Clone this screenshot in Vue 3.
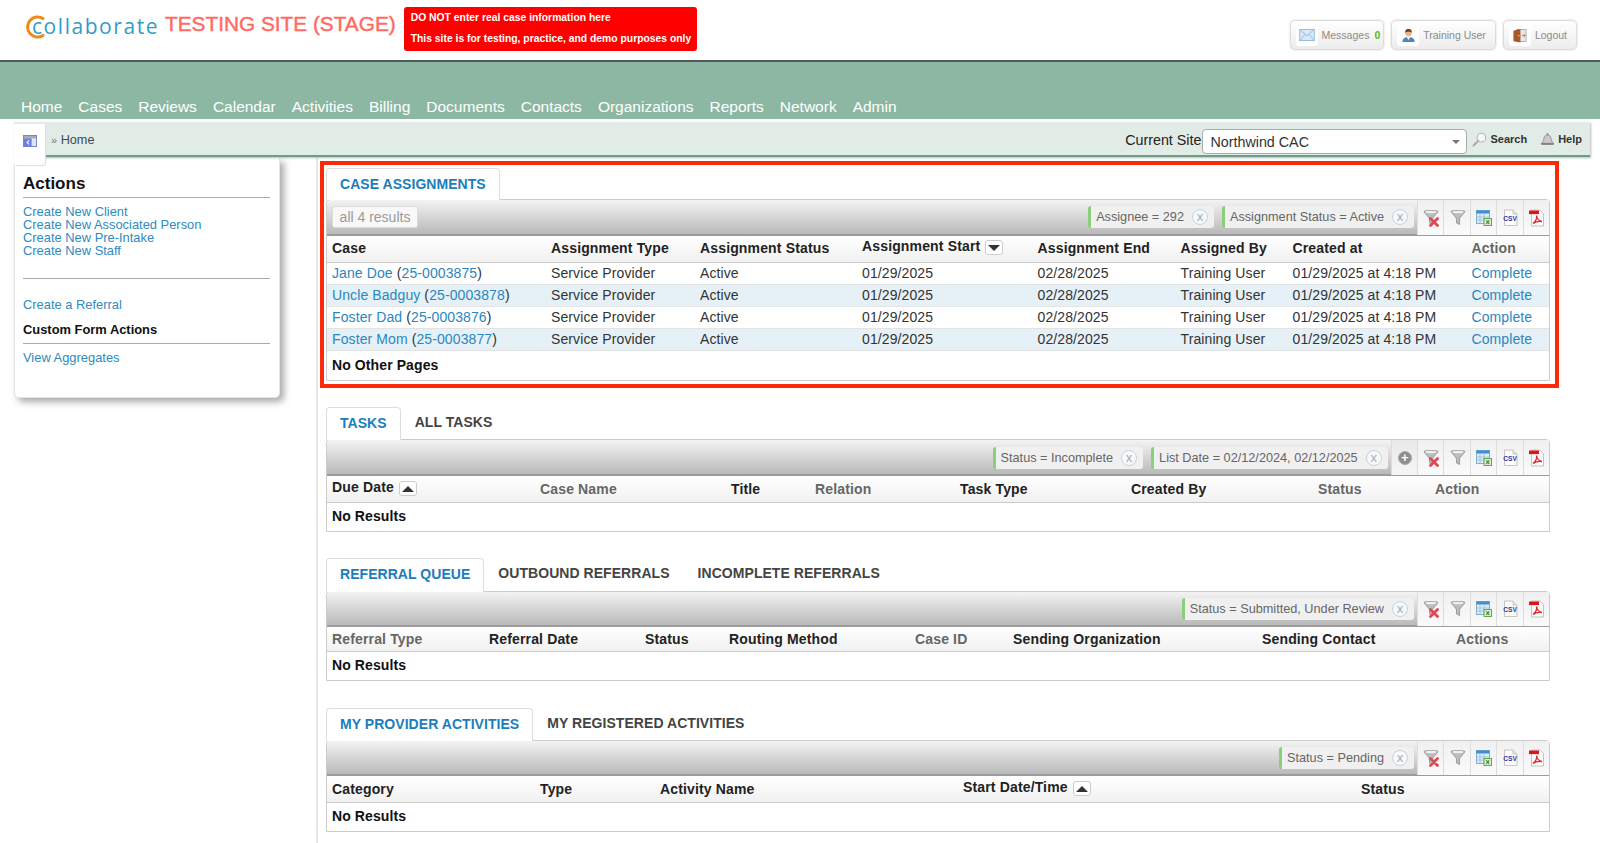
<script setup>
const nav = ['Home','Cases','Reviews','Calendar','Activities','Billing','Documents','Contacts','Organizations','Reports','Network','Admin']

const rows = [
  { name: 'Jane Doe', id: '25-0003875' },
  { name: 'Uncle Badguy', id: '25-0003878' },
  { name: 'Foster Dad', id: '25-0003876' },
  { name: 'Foster Mom', id: '25-0003877' }
]

const caseCols = '219px 149px 162px 175.5px 143px 112px 179px 1fr'
const caseHead = [
  { t: 'Case' }, { t: 'Assignment Type' }, { t: 'Assignment Status' },
  { t: 'Assignment Start', sort: 'down' }, { t: 'Assignment End' }, { t: 'Assigned By' },
  { t: 'Created at' }, { t: 'Action', dim: true }
]

const panels = [
  {
    tabs: ['TASKS', 'ALL TASKS'],
    pills: ['Status = Incomplete', 'List Date = 02/12/2024, 02/12/2025'],
    plus: true,
    cols: '208px 191px 84px 145px 171px 187px 117px 1fr',
    head: [
      { t: 'Due Date', sort: 'up' }, { t: 'Case Name', dim: true }, { t: 'Title' }, { t: 'Relation', dim: true },
      { t: 'Task Type' }, { t: 'Created By' }, { t: 'Status', dim: true }, { t: 'Action', dim: true }
    ],
    cls: 'p-tasks'
  },
  {
    tabs: ['REFERRAL QUEUE', 'OUTBOUND REFERRALS', 'INCOMPLETE REFERRALS'],
    pills: ['Status = Submitted, Under Review'],
    cols: '157px 156px 84px 186px 98px 249px 194px 1fr',
    head: [
      { t: 'Referral Type', dim: true }, { t: 'Referral Date' }, { t: 'Status' }, { t: 'Routing Method' },
      { t: 'Case ID', dim: true }, { t: 'Sending Organization' }, { t: 'Sending Contact' }, { t: 'Actions', dim: true }
    ],
    cls: 'p-ref'
  },
  {
    tabs: ['MY PROVIDER ACTIVITIES', 'MY REGISTERED ACTIVITIES'],
    pills: ['Status = Pending'],
    cols: '208px 120px 303px 398px 1fr',
    head: [
      { t: 'Category' }, { t: 'Type' }, { t: 'Activity Name' }, { t: 'Start Date/Time', sort: 'up' }, { t: 'Status' }
    ],
    cls: 'p-act'
  }
]

const tools = ['i-clear', 'i-filter', 'i-xls', 'i-csv', 'i-pdf']
</script>

<template>
  <div class="page">
    <svg class="sprite" width="0" height="0" aria-hidden="true">
      <defs>
        <symbol id="i-funnel" viewBox="0 0 18 18">
          <path d="M2 2.5C2 1.2 16 1.2 16 2.5 16 3.6 11 8 10.6 9.5L10.6 15.5 7.6 14 7.4 9.5C7 8 2 3.6 2 2.5Z" fill="#bdbdbd" stroke="#8d8d8d" stroke-width=".8"/>
          <ellipse cx="9" cy="3" rx="5.5" ry="1.2" fill="#efefef"/>
        </symbol>
        <symbol id="i-clear" viewBox="0 0 18 18">
          <use href="#i-funnel"/>
          <path d="M8.5 9.5L15.5 16.5M15.5 9.5L8.5 16.5" stroke="#e2484f" stroke-width="2.8" stroke-linecap="round"/>
        </symbol>
        <symbol id="i-filter" viewBox="0 0 18 18">
          <use href="#i-funnel"/>
        </symbol>
        <symbol id="i-xls" viewBox="0 0 18 18">
          <rect x="1.5" y="1.5" width="13" height="13" fill="#dcecf8" stroke="#6d9cc4" stroke-width=".8"/>
          <rect x="1.5" y="1.5" width="13" height="3" fill="#3d8fd1"/>
          <path d="M5 4.5V14.5M9 4.5V14.5M1.5 8H14.5M1.5 11H14.5" stroke="#8db8d8" stroke-width=".7"/>
          <rect x="9" y="9.5" width="7.5" height="7" fill="#d8efd0" stroke="#5c9a47" stroke-width=".9"/>
          <path d="M11.3 11.3L14.2 14.8M14.2 11.3L11.3 14.8" stroke="#3f8a30" stroke-width="1.1"/>
        </symbol>
        <symbol id="i-csv" viewBox="0 0 20 18">
          <path d="M4.5 1H13L17 5V16.5H4.5Z" fill="#fbfbfb" stroke="#b9b9b9" stroke-width=".8"/>
          <path d="M13 1V5H17" fill="#e6e6e6" stroke="#b9b9b9" stroke-width=".7"/>
          <text x="10" y="12" font-size="6.6" font-weight="700" text-anchor="middle" fill="#2f35a8" font-family="Liberation Sans, sans-serif">CSV</text>
        </symbol>
        <symbol id="i-pdf" viewBox="0 0 18 18">
          <path d="M3.5 1H12L15.5 4.5V17H3.5Z" fill="#fbfbfb" stroke="#b5b5b5" stroke-width=".8"/>
          <rect x="1" y="1.5" width="10" height="3.6" fill="#d9161c"/>
          <path d="M5 14.5C7.5 12.5 9 9 8.6 6.5 9 9.5 11 12 14 12.5 11 12 7.5 12.7 5 14.5Z" fill="none" stroke="#e02a2a" stroke-width="1.3"/>
        </symbol>
      </defs>
    </svg>

    <header class="top">
      <div class="logo">
        <svg class="logo-c" viewBox="0 0 22 24" width="22" height="24">
          <path d="M17 3.6A10 10 0 1 0 17 20.4" fill="none" stroke="#ee8a1c" stroke-width="3" stroke-linecap="round"/>
        </svg>
        <span class="logo-text">collaborate</span>
      </div>
      <div class="site-name">TESTING SITE (STAGE)</div>
      <div class="banner">
        <div>DO NOT enter real case information here</div>
        <div>This site is for testing, practice, and demo purposes only</div>
      </div>
      <div class="user-btns">
        <div class="ubtn">
          <span class="ubox">
            <svg viewBox="0 0 18 14" width="16" height="12">
              <rect x=".5" y=".5" width="17" height="13" fill="#d7e8f8" stroke="#8db4da"/>
              <path d="M.5 .5L9 8 17.5 .5M.5 13.5L6.5 6.5M17.5 13.5L11.5 6.5" fill="none" stroke="#8db4da"/>
            </svg>
          </span>
          <span class="ulabel">Messages</span><b class="zero">0</b>
        </div>
        <div class="ubtn">
          <span class="ubox">
            <svg viewBox="0 0 16 16" width="15" height="15">
              <path d="M1.5 15C1.5 11 4 9.5 8 9.5S14.5 11 14.5 15Z" fill="#4f86b8"/>
              <path d="M6 9.5L8 13 10 9.5Z" fill="#e9e9e9"/>
              <circle cx="8" cy="5.4" r="3.4" fill="#e8b48c"/>
              <path d="M4.4 5C4.2 1.5 6.5 1 8 1S11.8 1.5 11.6 5C10.5 3.6 6 3.8 4.4 5Z" fill="#7a3d1b"/>
            </svg>
          </span>
          <span class="ulabel">Training User</span>
        </div>
        <div class="ubtn">
          <span class="ubox">
            <svg viewBox="0 0 16 16" width="15" height="15">
              <rect x="5" y="1.5" width="10" height="13" fill="#e8e8e8" stroke="#9b9b9b" stroke-width=".8"/>
              <path d="M1.5 3L9 1V15.5L1.5 14Z" fill="#a85a22"/>
              <circle cx="7.3" cy="8.3" r=".8" fill="#f0d9a0"/>
              <path d="M10.5 8H14M12.5 6.3L14 8 12.5 9.7" fill="none" stroke="#8a8a8a" stroke-width=".9"/>
            </svg>
          </span>
          <span class="ulabel">Logout</span>
        </div>
      </div>
    </header>

    <nav class="nav">
      <a v-for="n in nav" :key="n" class="nav-item">{{ n }}</a>
    </nav>

    <div class="crumb-bar">
      <div class="side-tab">
        <svg viewBox="0 0 14 12" width="14" height="12">
          <rect x=".5" y=".5" width="13" height="11" fill="#dfe4f5" stroke="#7486cc"/>
          <rect x="1" y="1" width="12" height="2.4" fill="#a6abb6"/>
          <rect x="1" y="3.4" width="7.6" height="8" fill="#6d80de"/>
          <path d="M6.2 5.4L4 7.4 6.2 9.4" fill="none" stroke="#fff" stroke-width="1.1"/>
        </svg>
      </div>
      <div class="crumb"><span class="raquo">»</span> Home</div>
      <div class="crumb-right">
        <span class="cur-label">Current Site</span>
        <div class="site-select">
          <span>Northwind CAC</span>
          <i class="caret"></i>
        </div>
        <span class="tool-link search">
          <svg viewBox="0 0 16 16" width="15" height="15">
            <circle cx="10" cy="6" r="4.6" fill="#f6f6f6" stroke="#b4b4b4" stroke-width="1.1"/>
            <path d="M6.6 9.4L1.6 14.4" stroke="#a9a9a9" stroke-width="2" stroke-linecap="round"/>
          </svg>
          Search
        </span>
        <span class="tool-link help">
          <svg viewBox="0 0 16 16" width="15" height="14">
            <path d="M1 13C3 11.5 3.5 9.5 4 7 4.5 4.5 6 3.5 8 3.5S11.5 4.5 12 7C12.5 9.5 13 11.5 15 13Z" fill="#c9c9c9" stroke="#7d7d7d" stroke-width=".8"/>
            <rect x="1" y="13" width="14" height="1.6" fill="#6e6e6e"/>
            <circle cx="8" cy="2.4" r="1.1" fill="#777"/>
          </svg>
          Help
        </span>
      </div>
    </div>

    <div class="body">
      <aside class="sidebar">
        <h2 class="side-title">Actions</h2>
        <div class="side-links tight">
          <a>Create New Client</a>
          <a>Create New Associated Person</a>
          <a>Create New Pre-Intake</a>
          <a>Create New Staff</a>
        </div>
        <hr class="rule r2" />
        <a class="single first">Create a Referral</a>
        <div class="side-sub">Custom Form Actions</div>
        <hr class="rule r3" />
        <a class="single">View Aggregates</a>
      </aside>

      <main class="main">
        <div class="highlight">
          <section class="panel">
            <div class="tabs">
              <div class="tab active">CASE ASSIGNMENTS</div>
            </div>
            <div class="box">
              <div class="toolbar">
                <div class="count">all 4 results</div>
                <div class="pills">
                  <div class="pill"><span>Assignee = 292</span><i class="x">x</i></div>
                  <div class="pill"><span>Assignment Status = Active</span><i class="x">x</i></div>
                </div>
                <div class="tool-cells">
                  <div v-for="t in tools" :key="t" class="cell">
                    <svg :class="t === 'i-csv' ? 'ti wide' : 'ti'"><use :href="'#' + t" /></svg>
                  </div>
                </div>
              </div>
              <div class="thead" :style="{ gridTemplateColumns: caseCols }">
                <div v-for="h in caseHead" :key="h.t" :class="['th', { dim: h.dim, sorted: h.sort }]">
                  <span>{{ h.t }}</span>
                  <span v-if="h.sort" class="sortbtn"><i :class="h.sort"></i></span>
                </div>
              </div>
              <div class="rows">
                <div v-for="r in rows" :key="r.id" class="tr" :style="{ gridTemplateColumns: caseCols }">
                  <div><a>{{ r.name }}</a> (<a>{{ r.id }}</a>)</div>
                  <div>Service Provider</div>
                  <div>Active</div>
                  <div>01/29/2025</div>
                  <div>02/28/2025</div>
                  <div>Training User</div>
                  <div>01/29/2025 at 4:18 PM</div>
                  <div><a>Complete</a></div>
                </div>
              </div>
              <div class="foot">No Other Pages</div>
            </div>
          </section>
        </div>

        <section v-for="p in panels" :key="p.cls" :class="['panel', 'gap', p.cls]">
          <div class="tabs">
            <div v-for="(t, i) in p.tabs" :key="t" :class="['tab', { active: i === 0 }]">{{ t }}</div>
          </div>
          <div class="box">
            <div class="toolbar">
              <div class="pills">
                <div v-for="f in p.pills" :key="f" class="pill"><span>{{ f }}</span><i class="x">x</i></div>
              </div>
              <div class="tool-cells">
                <div v-if="p.plus" class="cell plus-cell"><span class="plus">+</span></div>
                <div v-for="t in tools" :key="t" class="cell">
                  <svg :class="t === 'i-csv' ? 'ti wide' : 'ti'"><use :href="'#' + t" /></svg>
                </div>
              </div>
            </div>
            <div class="thead" :style="{ gridTemplateColumns: p.cols }">
              <div v-for="h in p.head" :key="h.t" :class="['th', { dim: h.dim, sorted: h.sort }]">
                <span>{{ h.t }}</span>
                <span v-if="h.sort" class="sortbtn"><i :class="h.sort"></i></span>
              </div>
            </div>
            <div class="empty">No Results</div>
          </div>
        </section>
      </main>
    </div>
  </div>
</template>

<style>
html, body { margin: 0; overflow: hidden; background: #fff; }
</style>

<style scoped>
.page {
  width: 1600px;
  height: 843px;
  overflow: hidden;
  font-family: "Liberation Sans", Arial, sans-serif;
  font-size: 14px;
  color: #222;
  background: #fff;
}
.sprite { position: absolute; }
.top {
  height: 60px;
  display: flex;
  align-items: flex-start;
  border-bottom: 2px solid #4a5a54;
  box-sizing: content-box;
}
.logo { display: flex; align-items: center; margin: 15px 0 0 26px; width: 136px; height: 24px; position: relative; }
.logo-c { position: absolute; left: 0; top: 0; }
.logo-text {
  font-family: "Open Sans", sans-serif;
  font-size: 21px;
  letter-spacing: 1.55px;
  color: #2f9dc6;
  margin: -3px 0 0 6px;
  line-height: 20px;
}
.site-name { margin: 10px 0 0 3px; font-size: 20.8px; line-height: 28px; color: #ff6b63; -webkit-text-stroke: .45px #ff6b63; white-space: nowrap; }
.banner {
  margin: 7px 0 0 8px;
  width: 293px;
  height: 44px;
  box-sizing: border-box;
  padding: 1px 0 0 7px;
  background: #ff0000;
  border-radius: 3px;
  color: #fff;
  font-size: 10.35px;
  font-weight: 700;
  line-height: 20.5px;
  white-space: nowrap;
}
.user-btns { margin: 20px 23px 0 auto; display: flex; gap: 7px; }
.ubtn {
  height: 30px;
  display: flex;
  align-items: center;
  box-sizing: border-box;
  padding: 0 4px 0 5px;
  border: 1px solid #ddd;
  border-radius: 5px;
  background: linear-gradient(#fff, #ececec);
  box-shadow: 0 0 2px #ccc;
  font-size: 10.5px;
  color: #8b8b8b;
}
.ubox {
  width: 22px; height: 22px;
  background: #fff;
  border-radius: 3px;
  display: flex; align-items: center; justify-content: center;
  margin-right: 4px;
}
.ulabel { margin-right: 5px; }
.zero { color: #58b81e; font-size: 10.5px; margin-right: -1px; }
.nav {
  height: 57px;
  background: #8cb8a3;
  display: flex;
  gap: 16px;
  align-items: flex-end;
  padding-left: 21px;
  box-sizing: border-box;
}
.nav-item { font-size: 15.5px; line-height: 18px; color: #fff; padding-bottom: 3px; }
.crumb-bar {
  position: relative;
  height: 35px;
  margin: 3px 10px 0 14px;
  box-sizing: border-box;
  background: #e2ece6;
  border-bottom: 2px solid #6aa086;
  box-shadow: 1px 1px 2px #bbb;
  display: flex;
  align-items: center;
  padding-left: 37px;
  z-index: 2;
}
.side-tab {
  position: absolute;
  left: 0; top: 2px;
  width: 31px; height: 41px;
  background: #fff;
  border-radius: 0 0 3px 3px;
  box-shadow: 1px 1px 1px #ddd;
  display: flex;
  justify-content: center;
  padding-top: 11px;
  box-sizing: border-box;
  z-index: 3;
}
.crumb { font-size: 12.7px; color: #3c4b55; margin-top: 2px; }
.raquo { color: #777; font-size: 11px; }
.crumb-right { margin-left: auto; display: flex; align-items: center; }
.cur-label { font-size: 14.3px; color: #222; margin-top: 3px; }
.site-select {
  width: 265px; height: 25px;
  margin: 6px 5px 0 1px;
  box-sizing: border-box;
  background: #fff;
  border: 1px solid #aaa;
  border-radius: 4px;
  display: flex; align-items: center;
  justify-content: space-between;
  padding: 0 6px 0 7px;
  font-size: 14.3px;
  color: #333;
}
.caret { width: 0; height: 0; border: 4px solid transparent; border-top: 4px solid #777; border-bottom: 0; margin-top: 1px; }
.tool-link { display: flex; align-items: center; gap: 3px; font-size: 11px; font-weight: 700; color: #333; margin-top: 1px; }
.search { margin-right: 13px; }
.help { margin-right: 8px; }
.body { display: flex; align-items: stretch; height: 690px; }
.sidebar {
  width: 266px;
  height: 240px;
  margin: 1px 0 0 14px;
  box-sizing: border-box;
  padding: 16px 9px 0 8px;
  background: #fff;
  border-radius: 0 0 5px 5px;
  border: 1px solid #e4e4e4;
  border-top: 0;
  box-shadow: 4px 4px 7px #aaa;
  font-size: 12.9px;
}
.side-title { margin: 0; font-size: 17px; line-height: 20px; font-weight: 700; color: #111; padding-bottom: 3px; border-bottom: 1px solid #aaa; }
.side-links { margin-top: 7px; display: flex; flex-direction: column; }
.side-links a { line-height: 13px; color: #2e8ac0; }
.sidebar a.single { display: block; line-height: 15px; color: #2e8ac0; }
.rule { margin: 0; border: 0; border-top: 1px solid #aaa; }
.r2 { margin-top: 21px; }
.sidebar a.first { margin-top: 18px; }
.side-sub { margin-top: 10px; font-weight: 700; line-height: 15px; color: #111; }
.r3 { margin: 6px 0 6px; }
.main {
  margin-left: 36px;
  padding: 4px 0 0 2px;
  border-left: 2px solid #e5e5e5;
  width: 1243px;
  box-sizing: border-box;
}
.highlight {
  width: 1239px;
  height: 227px;
  box-sizing: border-box;
  border: 4px solid #fa2a0a;
  padding: 3px 5px 0 2px;
}
.highlight .tabs { height: 31px; }
.highlight .thead { padding-bottom: 2px; }
.gap { margin: 27px 0 0 6px; width: 1224px; }
.p-tasks { margin-top: 19px; }
.p-ref { margin-top: 26px; }
.tabs { display: flex; height: 32px; align-items: stretch; position: relative; z-index: 1; }
.p-ref .tabs { height: 33px; }
.p-ref .thead { height: 25px; }
.tab {
  padding: 0 13px;
  font-size: 14px;
  font-weight: 700;
  letter-spacing: .05px;
  color: #444;
  line-height: 29px;
  border: 1px solid transparent;
  border-bottom: 0;
  white-space: nowrap;
}
.tab.active {
  color: #1b7dbb;
  background: #fff;
  border-color: #ddd;
  border-radius: 4px 4px 0 0;
  line-height: 31px;
  margin-bottom: -1px;
}
.box { border: 1px solid #ccc; border-radius: 4px 4px 0 0; background: #fff; }
.toolbar {
  height: 36px;
  box-sizing: border-box;
  display: flex;
  align-items: stretch;
  background: linear-gradient(#f3f3f3, #b9b9b9);
  border-bottom: 2px solid #9c9c9c;
  border-radius: 4px 4px 0 0;
  position: relative;
}
.p-act .toolbar, .p-ref .toolbar { height: 35px; }
.count {
  margin: 6px 0 0 5px;
  height: 22px;
  width: 86px;
  box-sizing: border-box;
  background: #f8f8f8;
  border: 1px solid #ddd;
  border-radius: 3px;
  font-size: 14px;
  line-height: 20px;
  text-align: center;
  color: #9a9a9a;
}
.pills { margin-left: auto; display: flex; gap: 8px; padding-right: 3px; padding-top: 6px; }
.p-tasks .pills { padding-top: 7px; }
.pill {
  height: 22px;
  display: flex;
  align-items: center;
  box-sizing: border-box;
  background: #f0f0f0;
  border-left: 3px solid #8ad07a;
  border-radius: 3px;
  padding: 0 6px 0 5px;
  font-size: 12.7px;
  color: #666;
  white-space: nowrap;
}
.x {
  width: 16px; height: 16px;
  margin-left: 8px;
  box-sizing: border-box;
  border: 1px solid #c3d4e2;
  border-radius: 50%;
  font-style: normal;
  font-size: 13px;
  line-height: 13px;
  text-align: center;
  color: #98aec0;
  background: #f8f8f8;
}
.tool-cells { display: flex; margin-bottom: -1px; }
.cell {
  width: 26.4px;
  box-sizing: border-box;
  border-left: 1px solid #ddd;
  background: linear-gradient(#f0f0f0, #fafafa);
  display: flex;
  align-items: center;
  justify-content: center;
  padding-left: 1px;
}
.ti { width: 18px; height: 18px; }
.ti.wide { width: 20px; }
.plus-cell { background: linear-gradient(#e8e8e8, #f6f6f6); }
.plus {
  width: 14px; height: 14px;
  border-radius: 50%;
  background: #8d8d8d;
  border: 1px solid #aaa;
  box-sizing: border-box;
  color: #fff;
  font-weight: 700;
  font-size: 13px;
  line-height: 11px;
  text-align: center;
}
.thead {
  display: grid;
  height: 27px;
  padding-left: 5px;
  align-items: center;
  background: linear-gradient(#fff, #f1f1f1);
  border-bottom: 1px solid #ccc;
  box-sizing: border-box;
  font-weight: 700;
  font-size: 14px;
  letter-spacing: .15px;
  color: #222;
}
.th { display: flex; align-items: center; gap: 5px; white-space: nowrap; }
.th.sorted { margin-top: -4px; }
.dim { color: #666; }
.sortbtn {
  width: 18px; height: 15px;
  box-sizing: border-box;
  background: #fff;
  border: 1px solid #ccc;
  border-radius: 3px;
  display: flex; align-items: center; justify-content: center;
  margin-top: 3px;
}
.sortbtn i { width: 0; height: 0; border: 6px solid transparent; }
.sortbtn .up { border-top: 0; border-bottom: 6px solid #333; }
.sortbtn .down { border-bottom: 0; border-top: 6px solid #333; }
.tr {
  display: grid;
  height: 22px;
  box-sizing: border-box;
  padding: 0 0 1px 5px;
  align-items: center;
  border-bottom: 1px solid #e3e3e3;
  font-size: 14px;
  letter-spacing: .1px;
  color: #333;
  white-space: nowrap;
}
.tr:nth-child(even) { background: #e6f0f7; }
.tr a { color: #2b87c0; }
.foot, .empty {
  padding-left: 5px;
  font-size: 14px;
  font-weight: 700;
  letter-spacing: .1px;
  color: #111;
}
.foot { height: 29px; line-height: 28px; }
.empty { height: 28px; line-height: 26px; }
</style>
